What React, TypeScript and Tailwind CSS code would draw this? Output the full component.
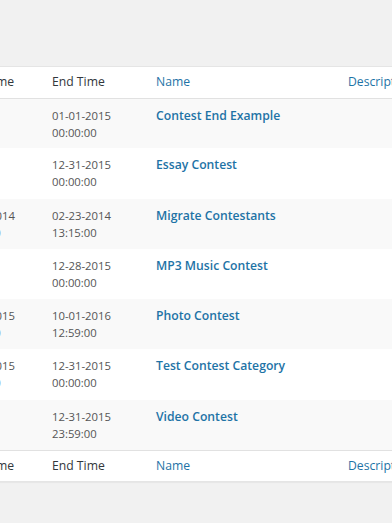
import React from 'react';

type Contest = {
    start: [string, string] | null;
    end: [string, string];
    name: string;
};

const contests: Contest[] = [
    { start: null, end: ['01-01-2015', '00:00:00'], name: 'Contest End Example' },
    { start: null, end: ['12-31-2015', '00:00:00'], name: 'Essay Contest' },
    { start: ['02-01-2014', '00:00:00'], end: ['02-23-2014', '13:15:00'], name: 'Migrate Contestants' },
    { start: null, end: ['12-28-2015', '00:00:00'], name: 'MP3 Music Contest' },
    { start: ['09-01-2015', '00:00:00'], end: ['10-01-2016', '12:59:00'], name: 'Photo Contest' },
    { start: ['12-01-2015', '00:00:00'], end: ['12-31-2015', '00:00:00'], name: 'Test Contest Category' },
    { start: null, end: ['12-31-2015', '23:59:00'], name: 'Video Contest' },
];

function HeadRow({ top }: { top?: boolean }) {
    return (
        <tr className={top ? 'border-b border-[#e1e1e1]' : 'border-t border-[#e1e1e1]'}>
            <th className="h-[31px] px-[9px] text-left font-normal text-[#32373c]">Start Time</th>
            <th className="h-[31px] px-[9px] text-left font-normal text-[#32373c]">End Time</th>
            <th className="h-[31px] px-[9px] text-left font-normal text-[#1e73a6]">Name</th>
            <th className="h-[31px] px-[9px] text-left font-normal text-[#1e73a6]">Description</th>
        </tr>
    );
}

export default function App() {
    return (
        <div className="h-[523px] w-[392px] overflow-hidden bg-[#f1f1f1] pt-[66px] font-['Open_Sans',sans-serif]">
            <div className="ml-[-54px] w-[620px] border border-[#e5e5e5] bg-white shadow-[0_1px_1px_rgba(0,0,0,0.04)]">
                <table className="w-full table-fixed border-collapse">
                    <colgroup>
                        <col className="w-[96px]" />
                        <col className="w-[104px]" />
                        <col className="w-[192px]" />
                        <col />
                    </colgroup>
                    <thead className="text-[12.2px]">
                        <HeadRow top />
                    </thead>
                    <tbody className="text-[11.3px] leading-[17px]">
                        {contests.map((c, i) => (
                            <tr key={c.name} className={`h-[50.3px] ${i % 2 === 0 ? 'bg-[#f9f9f9]' : 'bg-white'}`}>
                                <td className="px-[9px] pt-[8px] align-top text-[#555]">
                                    {c.start && (
                                        <>
                                            {c.start[0]}
                                            <br />
                                            {c.start[1]}
                                        </>
                                    )}
                                </td>
                                <td className="px-[9px] pt-[8px] align-top text-[#555]">
                                    {c.end[0]}
                                    <br />
                                    {c.end[1]}
                                </td>
                                <td className="px-[9px] pt-[8px] align-top">
                                    <a className="text-[12.2px] font-semibold text-[#1e73a6]">{c.name}</a>
                                </td>
                                <td className="px-[9px] pt-[8px] align-top text-[#555]"></td>
                            </tr>
                        ))}
                    </tbody>
                    <tfoot className="text-[12.2px]">
                        <HeadRow />
                    </tfoot>
                </table>
            </div>
        </div>
    );
}
